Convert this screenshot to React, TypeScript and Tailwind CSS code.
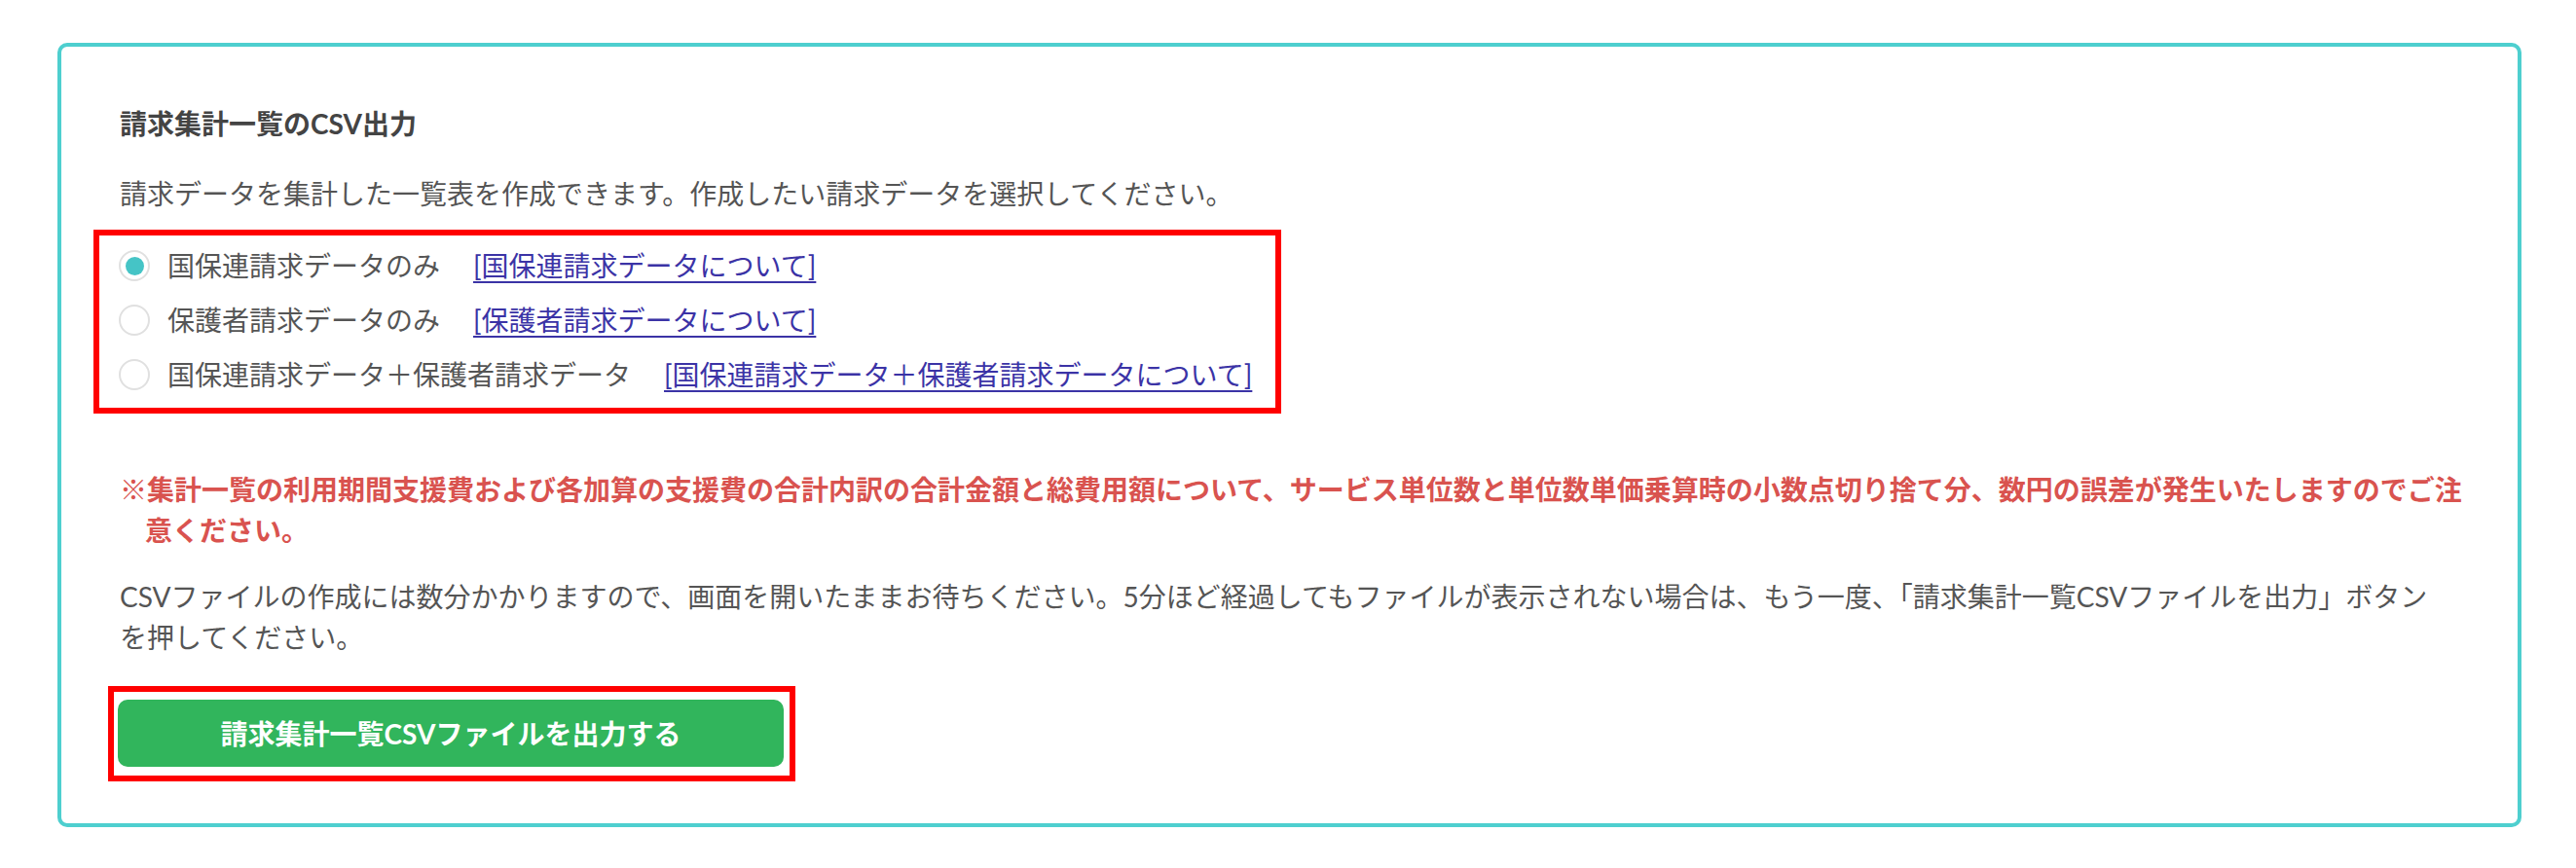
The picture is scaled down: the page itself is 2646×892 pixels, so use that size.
import React, { useState } from 'react';

const OPTIONS = [
  { value: 'kokuho', label: '国保連請求データのみ', link: '[国保連請求データについて]' },
  { value: 'hogosha', label: '保護者請求データのみ', link: '[保護者請求データについて]' },
  {
    value: 'both',
    label: '国保連請求データ＋保護者請求データ',
    link: '[国保連請求データ＋保護者請求データについて]',
  },
];

const App: React.FC = () => {
  const [selected, setSelected] = useState('kokuho');

  return (
    <div className="min-h-screen bg-white pl-[59px] pt-[44px] font-['Lato','Noto_Sans_CJK_JP',sans-serif]">
      <section className="w-[2531px] rounded-[10px] border-4 border-[#4ecfcf] pl-[60px] pt-[58px] pb-[43px]">
        {/* タイトル */}
        <h2 className="text-[28px] font-bold leading-[42px] text-[#444]">請求集計一覧のCSV出力</h2>
        <p className="mt-[30px] text-[28px] leading-[42px] text-[#555]">
          請求データを集計した一覧表を作成できます。作成したい請求データを選択してください。
        </p>

        {/* 請求データ選択 */}
        <div className="-ml-[27px] mt-[16px] w-fit border-[6px] border-[#f00] pt-[3px] pb-[6px] pl-[20px] pr-[24px]">
          {OPTIONS.map((opt) => {
            const checked = selected === opt.value;
            return (
              <label
                key={opt.value}
                className="flex h-[56px] cursor-pointer items-center whitespace-nowrap text-[28px] text-[#555]"
              >
                <input
                  type="radio"
                  name="billing"
                  value={opt.value}
                  checked={checked}
                  onChange={() => setSelected(opt.value)}
                  className="sr-only"
                />
                <span className="flex h-[32px] w-[32px] shrink-0 items-center justify-center rounded-full border-2 border-[#e0e0e0] bg-white">
                  {checked && <span className="h-[19px] w-[19px] rounded-full bg-[#45c4c6]" />}
                </span>
                <span className="ml-[18px]">{opt.label}</span>
                <a href="#" className="ml-[34px] text-[#3b33a6] underline underline-offset-[5px]">
                  {opt.link}
                </a>
              </label>
            );
          })}
        </div>

        {/* 注意 */}
        <p className="mt-[57px] whitespace-nowrap pl-[26px] -indent-[26px] text-[28px] font-bold leading-[42px] text-[#d9534f]">
          ※集計一覧の利用期間支援費および各加算の支援費の合計内訳の合計金額と総費用額について、サービス単位数と単位数単価乗算時の小数点切り捨て分、数円の誤差が発生いたしますのでご注
          <br />
          意ください。
        </p>

        <p className="mt-[26px] whitespace-nowrap text-[28px] leading-[42px] text-[#555]">
          CSVファイルの作成には数分かかりますので、画面を開いたままお待ちください。5分ほど経過してもファイルが表示されない場合は、もう一度、「請求集計一覧CSVファイルを出力」ボタン
          <br />
          を押してください。
        </p>

        {/* 出力ボタン */}
        <div className="-ml-[12px] mt-[29px] w-fit border-[6px] border-[#f00] pl-[4px] pr-[6px] pt-[8px] pb-[9px]">
          <button
            type="button"
            className="flex h-[69px] w-[684px] items-center justify-center rounded-[10px] bg-[#31b55c] text-[28px] font-bold text-white"
          >
            請求集計一覧CSVファイルを出力する
          </button>
        </div>
      </section>
    </div>
  );
};

export default App;
